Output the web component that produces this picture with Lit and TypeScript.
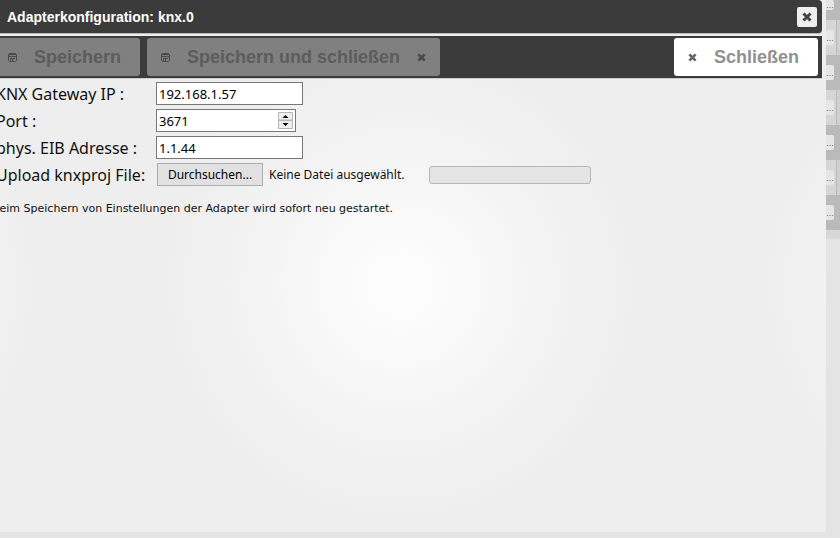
import { LitElement, html, css } from "lit";
import { customElement } from "lit/decorators.js";

const cross = html`<svg class="icon" viewBox="0 0 10 10" aria-hidden="true">
  <path d="M1.5 1.5L8.5 8.5M8.5 1.5L1.5 8.5" fill="none" stroke="currentColor" stroke-width="3" />
</svg>`;

const disk = html`<svg class="icon" viewBox="0 0 9 9" aria-hidden="true">
  <path fill="none" stroke="currentColor" d="M1.500 .5h6l1 1v6l-1 1h-6l-1-1v-6z" />
  <path fill="currentColor" d="M1 1h7v1H1zM1 3h7v1H1zM2 5h5v1H2zM2 5h1v3H2zM4 5h1v3H4z" />
</svg>`;

@customElement("app-root")
export class AppRoot extends LitElement {
  static styles = css`
    * { box-sizing: border-box; }
    :host {
      display: flex;
      min-height: 100vh;
      overflow: hidden;
      background: #e4e4e4;
      color: #111;
      font: 16px "Noto Sans", sans-serif;
    }
    .dialog {
      flex: 1;
      min-width: 0;
      margin-bottom: 6px;
      overflow: hidden;
      background: #eee radial-gradient(circle 240px at 300px 285px, #fdfdfd, #fafafa 25%, #f3f3f3 60%, #eee) 100px 0 / 600px 100% repeat-x;
    }
    .bar {
      display: flex;
      align-items: center;
      margin-right: 4px;
      background: #3b3b3b;
      font-family: "Liberation Sans", Arial, sans-serif;
      font-weight: bold;
    }
    .title {
      height: 34px;
      padding: 0 5px 0 7px;
      justify-content: space-between;
      border-bottom: 1px solid #bbb;
      border-radius: 0 4px 4px 0;
      color: #fff;
    }
    h1 { margin: 0; font-size: 14px; }
    button { font: inherit; cursor: pointer; }
    .x {
      display: grid;
      place-items: center;
      width: 20px;
      height: 20px;
      padding: 0;
      border: 0;
      border-radius: 2px;
      background: #eee;
      color: #444;
    }
    .icon { width: 9px; height: 9px; flex: none; }
    .x .icon { width: 10px; height: 10px; }
    .tools {
      height: 43px;
      margin-top: 2px;
      padding-right: 4px;
      gap: 7px;
      border-bottom: 1px solid #ccc;
    }
    .tool {
      display: flex;
      align-items: center;
      gap: 17px;
      height: 38px;
      padding: 0 14px;
      border: 0;
      border-radius: 3px;
      background: #808080;
      color: #5c5c5c;
      font-size: 18px;
      white-space: nowrap;
    }
    .tool .icon { color: #4a4a4a; }
    .first { padding: 0 19px 0 8px; border-radius: 0 3px 3px 0; }
    .close { margin-left: auto; padding-right: 19px; background: #fff; color: #919191; }
    .close .icon { color: #666; }
    .form {
      display: grid;
      grid-template-columns: 160px 1fr;
      align-items: center;
      row-gap: 4px;
      margin: 3px 0 0 -4px;
      white-space: nowrap;
    }
    .field {
      height: 23px;
      width: 147px;
      padding: 0 2px;
      border: 1px solid #777;
      background: #fff;
      color: #000;
      font: 13px "Noto Sans", sans-serif;
    }
    .spin { display: flex; align-items: center; width: 140px; }
    .num {
      flex: 1;
      min-width: 0;
      padding: 0;
      border: 0;
      background: none;
      font: inherit;
    }
    .arrows { width: 15px; height: 17px; }
    .upload { display: flex; align-items: center; padding-left: 1px; font-size: 12px; }
    .browse {
      width: 106px;
      height: 23px;
      margin-right: 6px;
      padding: 0;
      border: 1px solid #adadad;
      background: #e1e1e1;
      color: #000;
    }
    .file { width: 160px; }
    .progress {
      width: 162px;
      height: 18px;
      border: 1px solid #b6b6b6;
      border-radius: 3px;
      background: #e4e4e4;
    }
    .note { margin: 14px 0 0 -8px; font: 11px/18px "DejaVu Sans", sans-serif; white-space: nowrap; }
    .rows { width: 14px; height: 239px; overflow: hidden; background: #d8d8d8; }
    .row {
      display: flex;
      align-items: center;
      height: 35px;
      border-right: 3px solid #d0d0d0;
      box-shadow: inset -1px 0 #bababa;
      background: #d6d6d6;
    }
    .row:nth-child(odd) { border-color: #bababa; background: #bababa; }
    .row:first-child { height: 20px; padding-bottom: 10px; }
    .more {
      width: 8px;
      height: 15px;
      padding: 0;
      border: 0;
      border-radius: 0 2px 2px 0;
      background: #e6e6e6;
      color: #666;
      font: 9px/12px "Liberation Sans", sans-serif;
    }
    .row:first-child .more { height: 10px; line-height: 6px; }
  `;

  render() {
    return html`
      <main class="dialog">
        <header class="bar title">
          <h1>Adapterkonfiguration: knx.0</h1>
          <button class="x" aria-label="Schließen">${cross}</button>
        </header>
        <div class="bar tools">
          <button class="tool first">${disk}Speichern</button>
          <button class="tool">${disk}Speichern und schließen ${cross}</button>
          <button class="tool close">${cross}Schließen</button>
        </div>
        <div class="form">
          <label for="ip">KNX Gateway IP :</label>
          <input class="field" id="ip" value="192.168.1.57" />
          <label for="port">Port :</label>
          <div class="field spin">
            <input class="num" id="port" inputmode="numeric" value="3671" />
            <svg class="arrows" viewBox="0 0 15 17" aria-hidden="true">
              <path fill="#eee" stroke="#b5b5b5" d="M.5 .5h14v7.500h-14zM.5 8.500h14v8h-14z" />
              <path fill="#000" d="M4.500 6h6l-3-3zM4.500 11h6l-3 3z" />
            </svg>
          </div>
          <label for="addr">phys. EIB Adresse :</label>
          <input class="field" id="addr" value="1.1.44" />
          <label for="file">Upload knxproj File:</label>
          <div class="upload">
            <button class="browse" id="file">Durchsuchen...</button>
            <span class="file">Keine Datei ausgewählt.</span>
            <div class="progress" role="progressbar" aria-label="Upload"></div>
          </div>
        </div>
        <p class="note">Beim Speichern von Einstellungen der Adapter wird sofort neu gestartet.</p>
      </main>
      <aside class="rows">
        ${Array.from({ length: 7 }, () => html`<div class="row"><button class="more">...</button></div>`)}
      </aside>
    `;
  }
}
